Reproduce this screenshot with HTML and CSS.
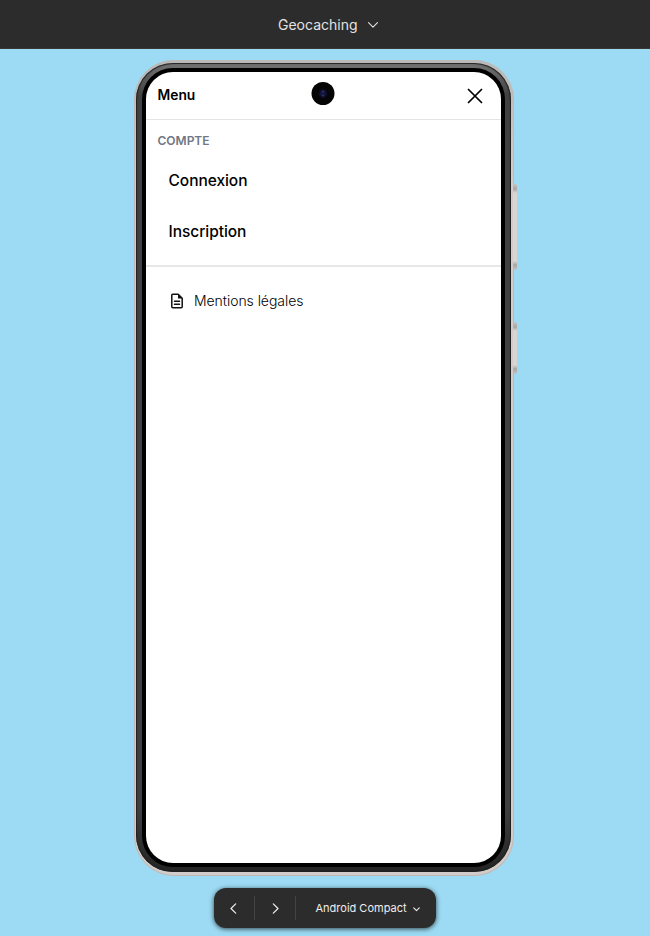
FILE: index.html
```html
<!DOCTYPE html>
<html lang="fr">
<head>
<meta charset="utf-8">
<title>Geocaching</title>
<link rel="stylesheet" href="styles.css">
</head>
<body>
<header class="topbar">
  <span class="project">Geocaching</span>
  <svg class="project-arrow" width="10" height="6" viewBox="0 0 10 6"><path d="M.5.7 5 5.2 9.5.7"/></svg>
</header>
<main class="stage">
  <div class="phone">
    <i class="key key-volume"></i>
    <i class="key key-power"></i>
    <div class="band">
      <div class="bezel">
        <div class="screen">
          <div class="screen-head">
            <h1 class="title">Menu</h1>
            <svg class="close" width="16" height="16" viewBox="0 0 16 16"><path d="M1.500 1.500l13 13M14.500 1.500l-13 13"/></svg>
          </div>
          <section class="account">
            <h2 class="label">COMPTE</h2>
            <a class="link">Connexion</a>
            <a class="link">Inscription</a>
          </section>
          <a class="legal">
            <svg width="12" height="16" viewBox="0 0 12 16"><path d="M1.8 1.2h5.4l4 4v8.6a1 1 0 0 1-1 1H1.8a1 1 0 0 1-1-1V2.200a1 1 0 0 1 1-1Z"/><path class="fold" d="M7 1v4.500h4.500Z"/><path d="M3.500 8.300h5M3.500 11.300h5"/></svg>
            <span>Mentions légales</span>
          </a>
        </div>
      </div>
    </div>
    <svg class="camera" width="24" height="24" viewBox="0 0 24 24"><circle cx="12" cy="11.500" r="11.500" fill="#050506"/><circle cx="12" cy="11.500" r="4.500" fill="#0b0b24"/><circle cx="12" cy="11.500" r="3" fill="#14143f"/><circle cx="12" cy="9.500" r="1" fill="#25376c"/><circle cx="12" cy="13.500" r="1" fill="#25376c"/></svg>
  </div>
  <nav class="toolbar">
    <span class="step"><svg width="7" height="11" viewBox="0 0 7 11"><path d="M5.700.8 1 5.500l4.700 4.700"/></svg></span>
    <span class="step"><svg width="7" height="11" viewBox="0 0 7 11"><path d="M1.300.8 6 5.500l-4.700 4.700"/></svg></span>
    <span class="device">Android Compact <svg width="7" height="5" viewBox="0 0 7 5"><path d="M.7.8 3.500 3.600 6.300.8"/></svg></span>
  </nav>
</main>
</body>
</html>
```
FILE: styles.css
```css
* { box-sizing: border-box; }
body {
  margin: 0;
  height: 936px;
  overflow: hidden;
  background: #9ddbf4;
  font-family: Inter, "Liberation Sans", sans-serif;
}
svg { display: block; flex: none; fill: none; stroke-linecap: round; stroke-linejoin: round; }
.topbar {
  height: 49px;
  padding: 0 0 0 278px;
  display: flex;
  align-items: center;
  background: #2c2c2c;
  border-bottom: 1px solid #3b3734;
  color: #e3e3e3;
}
.project { font-size: 14px; letter-spacing: 0; }
.project-arrow { margin: 1px 0 0 10px; stroke: #e3e3e3; stroke-width: 1.100; }
.stage { display: flex; flex-direction: column; padding-top: 11px; }
.phone {
  position: relative;
  width: 380px;
  height: 816px;
  margin-left: 134px;
  padding: 3px 3px 4px 2px;
  border-radius: 40px;
  background: linear-gradient(#b9b9b9, #d2cdcb 15%, #d2cdcb);
  box-shadow: inset 0 0 0 1px #bcb9b8;
}
.band {
  height: 100%;
  padding: 5px 6px;
  border-radius: 37px;
  background: linear-gradient(#737373, #414141 4%, #404040 92%, #242323);
  box-shadow: inset 0 0 1px 1px #202020;
}
.bezel { height: 100%; padding: 4px; border-radius: 31px; background: #000; }
.screen { height: 100%; border-radius: 27px; background: #fff; overflow: hidden; color: #000; }
.screen-head {
  height: 48px;
  padding: 0 18px 0 11.500px;
  display: flex;
  align-items: center;
  justify-content: space-between;
  border-bottom: 1px solid #e4e5e9;
}
.title { margin: -2px 0 0; font-size: 13.800px; font-weight: 600; }
.close { stroke: #000; stroke-width: 1.700; }
.account {
  height: 147px;
  padding: 12px 11.500px 0;
  border-bottom: 2px solid #e7e7e9;
}
.label { margin: 0 0 20px; font-size: 12px; line-height: 17px; font-weight: 600; color: #717784; }
.link { display: block; margin-bottom: 27px; padding-left: 11px; font-size: 15.500px; line-height: 24px; font-weight: 500; letter-spacing: -.05px; }
.legal { display: flex; align-items: center; gap: 11px; margin: 23px 0 0 25px; font-size: 14px; line-height: 22px; font-weight: 300; letter-spacing: -.05px; }
.legal svg { margin-top: -1px; stroke: #111; stroke-width: 1.500; }
.legal .fold { fill: #111; stroke: none; }
.camera { position: absolute; left: 177px; top: 22px; }
.key {
  position: absolute;
  left: 379px;
  width: 4px;
  border-radius: 0 2px 2px 0;
  background: linear-gradient(#c5c3c2, #aaa6a4 5px, #d9d5d4 9px, #d9d5d4 calc(100% - 9px), #aaa6a4 calc(100% - 5px), #c5c3c2);
}
.key-volume { top: 124px; height: 86px; }
.key-power { top: 262px; height: 52px; }
.toolbar {
  width: 222px;
  height: 40px;
  margin: 12px 0 0 214px;
  display: flex;
  align-items: center;
  border-radius: 12px;
  background: #2c2c2c;
  box-shadow: 0 1px 5px rgba(0,0,0,.7);
  color: #eee;
}
.step { width: 41px; height: 24px; display: flex; align-items: center; justify-content: center; border-right: 1px solid #444; }
.step:first-child { padding-right: 2px; }
.step svg { stroke: #eee; stroke-width: 1.200; }
.device { display: flex; align-items: center; margin-left: 19.500px; font-size: 11px; letter-spacing: 0; white-space: nowrap; }
.device svg { margin: 2px 0 0 6px; stroke: #eee; stroke-width: 1.100; }
```
